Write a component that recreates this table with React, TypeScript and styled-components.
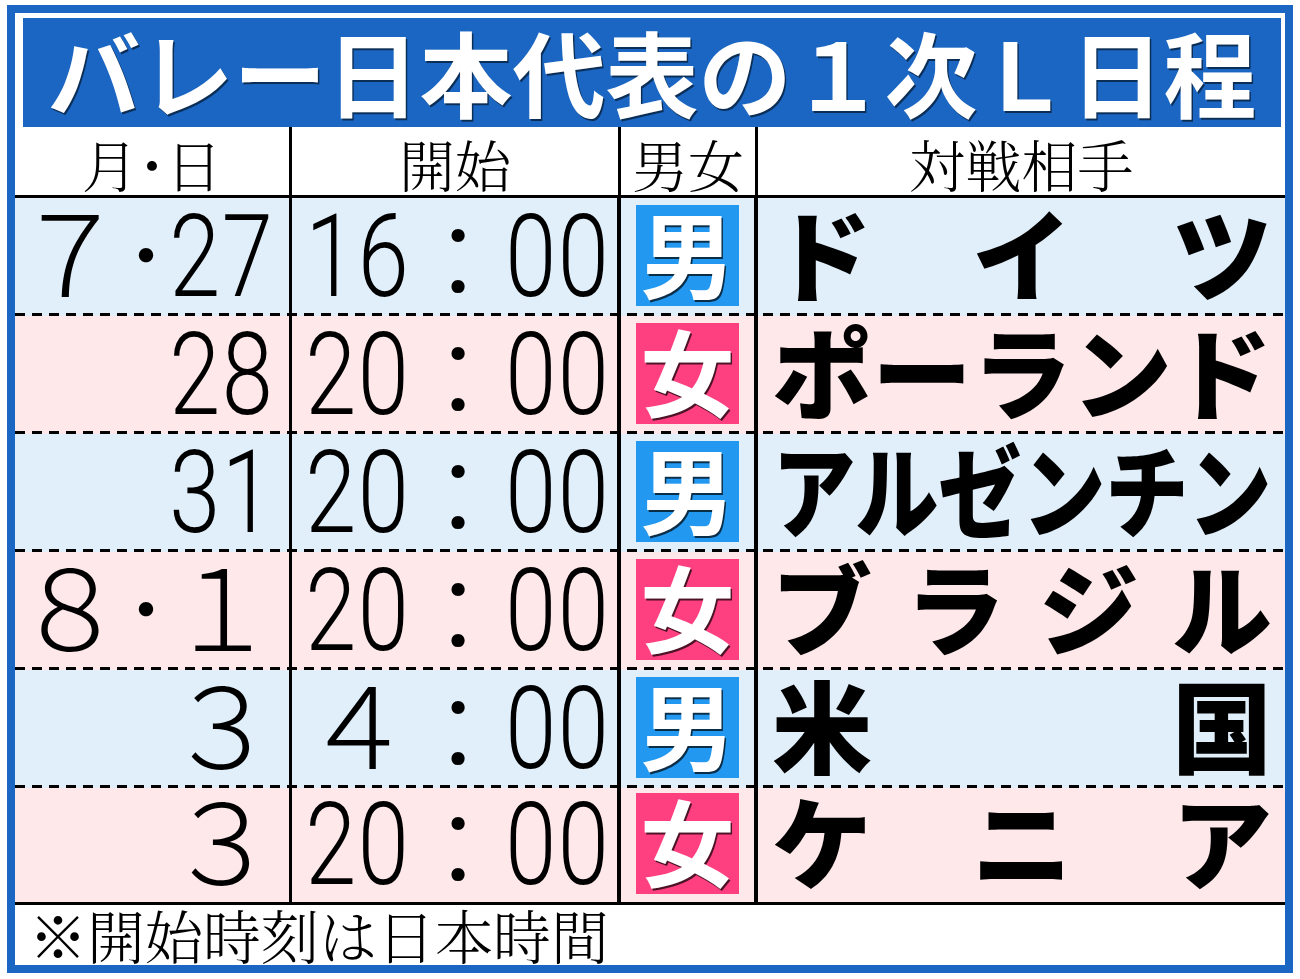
import React from "react";
import styled, { createGlobalStyle } from "styled-components";

const GlobalStyle = createGlobalStyle`
  html, body {
    margin: 0;
    padding: 0;
    background: #fff;
  }
  body {
    font-family: "Noto Sans CJK JP", "Noto Sans", sans-serif;
  }
`;

type Sex = "男" | "女";

type Match = {
  month?: string;
  day: string;
  hour: string;
  sex: Sex;
  opponent: string[];
};

const matches: Match[] = [
  { month: "７", day: "27", hour: "16", sex: "男", opponent: ["ド", "イ", "ツ"] },
  { day: "28", hour: "20", sex: "女", opponent: ["ポ", "ー", "ラ", "ン", "ド"] },
  { day: "31", hour: "20", sex: "男", opponent: ["ア", "ル", "ゼ", "ン", "チ", "ン"] },
  { month: "８", day: "１", hour: "20", sex: "女", opponent: ["ブ", "ラ", "ジ", "ル"] },
  { day: "３", hour: "４", sex: "男", opponent: ["米", "国"] },
  { day: "３", hour: "20", sex: "女", opponent: ["ケ", "ニ", "ア"] },
];

const NAME_WIDTH = 500;
const NAME_SIZE = 100;

const isWide = (s: string) => /[０-９]/.test(s);

const Digits = ({ value }: { value: string }) =>
  isWide(value) ? <WideNum>{value}</WideNum> : <NarrowNum>{value}</NarrowNum>;

const App = () => {
  return (
    <>
      <GlobalStyle />
      <Frame>
        <Title>バレー日本代表の１次Ｌ日程</Title>
        <HeaderRow>
          <HeadCell>月･日</HeadCell>
          <HeadCell>開始</HeadCell>
          <HeadCell>男女</HeadCell>
          <HeadCell $last>対戦相手</HeadCell>
        </HeaderRow>
        {matches.map((m, index) => {
          const squeeze = Math.min(1, NAME_WIDTH / (m.opponent.length * NAME_SIZE));
          return (
            <Row
              key={index}
              $tone={index % 2 === 0 ? "blue" : "pink"}
              $last={index === matches.length - 1}
            >
              <DateCell>
                <Slot $width={110}>{m.month && <Digits value={m.month} />}</Slot>
                <Slot $width={42}>{m.month && <Dot>・</Dot>}</Slot>
                <Slot $width={110}>
                  <Digits value={m.day} />
                </Slot>
              </DateCell>
              <TimeCell>
                <Slot $width={120}>
                  <Digits value={m.hour} />
                </Slot>
                <Slot $width={80}>
                  <Colon>:</Colon>
                </Slot>
                <Slot $width={119}>
                  <Digits value="00" />
                </Slot>
              </TimeCell>
              <SexCell>
                <Badge $sex={m.sex}>
                  <span>{m.sex}</span>
                </Badge>
              </SexCell>
              <NameCell>
                {m.opponent.map((ch, i) => (
                  <Char key={i} style={{ width: NAME_SIZE * squeeze }}>
                    <CharInner style={{ transform: `scaleX(${squeeze})` }}>{ch}</CharInner>
                  </Char>
                ))}
              </NameCell>
            </Row>
          );
        })}
        <Footer>※開始時刻は日本時間</Footer>
      </Frame>
    </>
  );
};

export default App;

const Frame = styled.div`
  box-sizing: border-box;
  display: flex;
  flex-direction: column;

  width: 1286px;
  height: 968px;
  margin: 5px 0 0 7px;

  background-color: #fff;
  border: 8px solid #1a66c2;
`;

const Title = styled.div`
  display: flex;
  align-items: center;
  justify-content: center;
  flex-shrink: 0;

  height: 109px;
  margin: 5px 4px 0 8px;
  padding-bottom: 4px;
  box-sizing: border-box;

  background-color: #1a66c2;
  color: #fff;

  font-size: 93px;
  font-weight: 700;
  line-height: 1;
  white-space: nowrap;
  text-shadow: 1.5px 1.5px 0 rgba(0, 0, 0, 0.55);
`;

const columns = "277px 329px 137px 1fr";

const HeaderRow = styled.div`
  box-sizing: border-box;
  display: grid;
  grid-template-columns: ${columns};
  grid-template-rows: minmax(0, 1fr);
  flex-shrink: 0;

  height: 71px;
  border-bottom: 3px solid #000;
`;

const HeadCell = styled.div<{ $last?: boolean }>`
  box-sizing: border-box;
  display: flex;
  align-items: center;
  justify-content: center;

  border-right: ${(p) => (p.$last ? "none" : "3px solid #000")};

  font-family: "Noto Serif CJK JP", "Noto Sans CJK JP", serif;
  font-size: 56px;
  font-weight: 300;
  line-height: 1;
  color: #000;
  padding-top: 4px;
`;

const Row = styled.div<{ $tone: "blue" | "pink"; $last?: boolean }>`
  box-sizing: border-box;
  display: grid;
  grid-template-columns: ${columns};
  grid-template-rows: minmax(0, 1fr);
  flex-shrink: 0;

  height: ${(p) => (p.$last ? "117px" : "118px")};

  background-color: ${(p) => (p.$tone === "blue" ? "#e1effb" : "#fee8ea")};
  background-image: ${(p) =>
    p.$last
      ? "none"
      : "repeating-linear-gradient(to right, #000 0 10px, transparent 10px 17px)"};
  background-size: 100% 3px;
  background-position: left bottom;
  background-repeat: no-repeat;

  border-bottom: ${(p) => (p.$last ? "3px solid #000" : "none")};
`;

const Cell = styled.div`
  box-sizing: border-box;
  display: flex;
  align-items: center;
  min-height: 0;

  border-right: 3px solid #000;
  padding-bottom: 3px;
`;

const DateCell = styled(Cell)`
  padding-left: 0;
`;

const TimeCell = styled(Cell)`
  padding-left: 6px;
  border-right-width: 4px;
`;

const SexCell = styled(Cell)`
  justify-content: center;
  border-right-width: 4px;
`;

const NameCell = styled(Cell)`
  justify-content: space-between;
  border-right: none;
  padding: 0 13px 3px 14px;
`;

const Slot = styled.div<{ $width: number }>`
  display: flex;
  align-items: center;
  justify-content: center;

  width: ${(p) => p.$width}px;
  flex-shrink: 0;
`;

const WideNum = styled.span`
  display: inline-block;

  font-size: 112px;
  font-weight: 300;
  line-height: 1;
  color: #000;
  white-space: nowrap;

  margin-bottom: 16px;
`;

const NarrowNum = styled.span`
  display: inline-block;

  font-family: Roboto, "Noto Sans", sans-serif;
  font-size: 115px;
  font-weight: 300;
  line-height: 1;
  color: #000;
  white-space: nowrap;
  letter-spacing: 2px;

  margin-top: 2px;
  transform: scaleX(0.8);
`;

const Dot = styled.span`
  display: inline-block;
  font-size: 76px;
  font-weight: 300;
  line-height: 1;
  margin-bottom: 10px;
`;

const Colon = styled.span`
  display: inline-block;
  font-family: Roboto, "Noto Sans", sans-serif;
  font-size: 118px;
  font-weight: 400;
  line-height: 1;
  margin-bottom: 8px;
`;

const Badge = styled.div<{ $sex: Sex }>`
  display: flex;
  align-items: center;
  justify-content: center;

  width: 103px;
  height: 101px;

  background-color: ${(p) => (p.$sex === "男" ? "#2298f0" : "#fe3f80")};
  color: #fff;

  font-size: 94px;
  font-weight: 700;
  line-height: 1;
  text-shadow: 1.5px 1.5px 0 rgba(0, 0, 0, 0.7);

  & > span {
    display: block;
    margin-bottom: 10px;
  }
`;

const Char = styled.span`
  display: inline-flex;
  justify-content: center;
  overflow: visible;

  font-size: ${NAME_SIZE}px;
  font-weight: 900;
  line-height: 1;
  color: #000;
  margin-bottom: 10px;
`;

const CharInner = styled.span`
  display: inline-block;
  width: 1em;
  flex-shrink: 0;
  text-align: center;
`;

const Footer = styled.div`
  flex: 1;
  display: flex;
  align-items: center;

  padding: 0 0 4px 14px;

  font-family: "Noto Serif CJK JP", "Noto Sans CJK JP", serif;
  font-size: 58px;
  font-weight: 300;
  line-height: 1;
  color: #000;
  white-space: nowrap;
`;
